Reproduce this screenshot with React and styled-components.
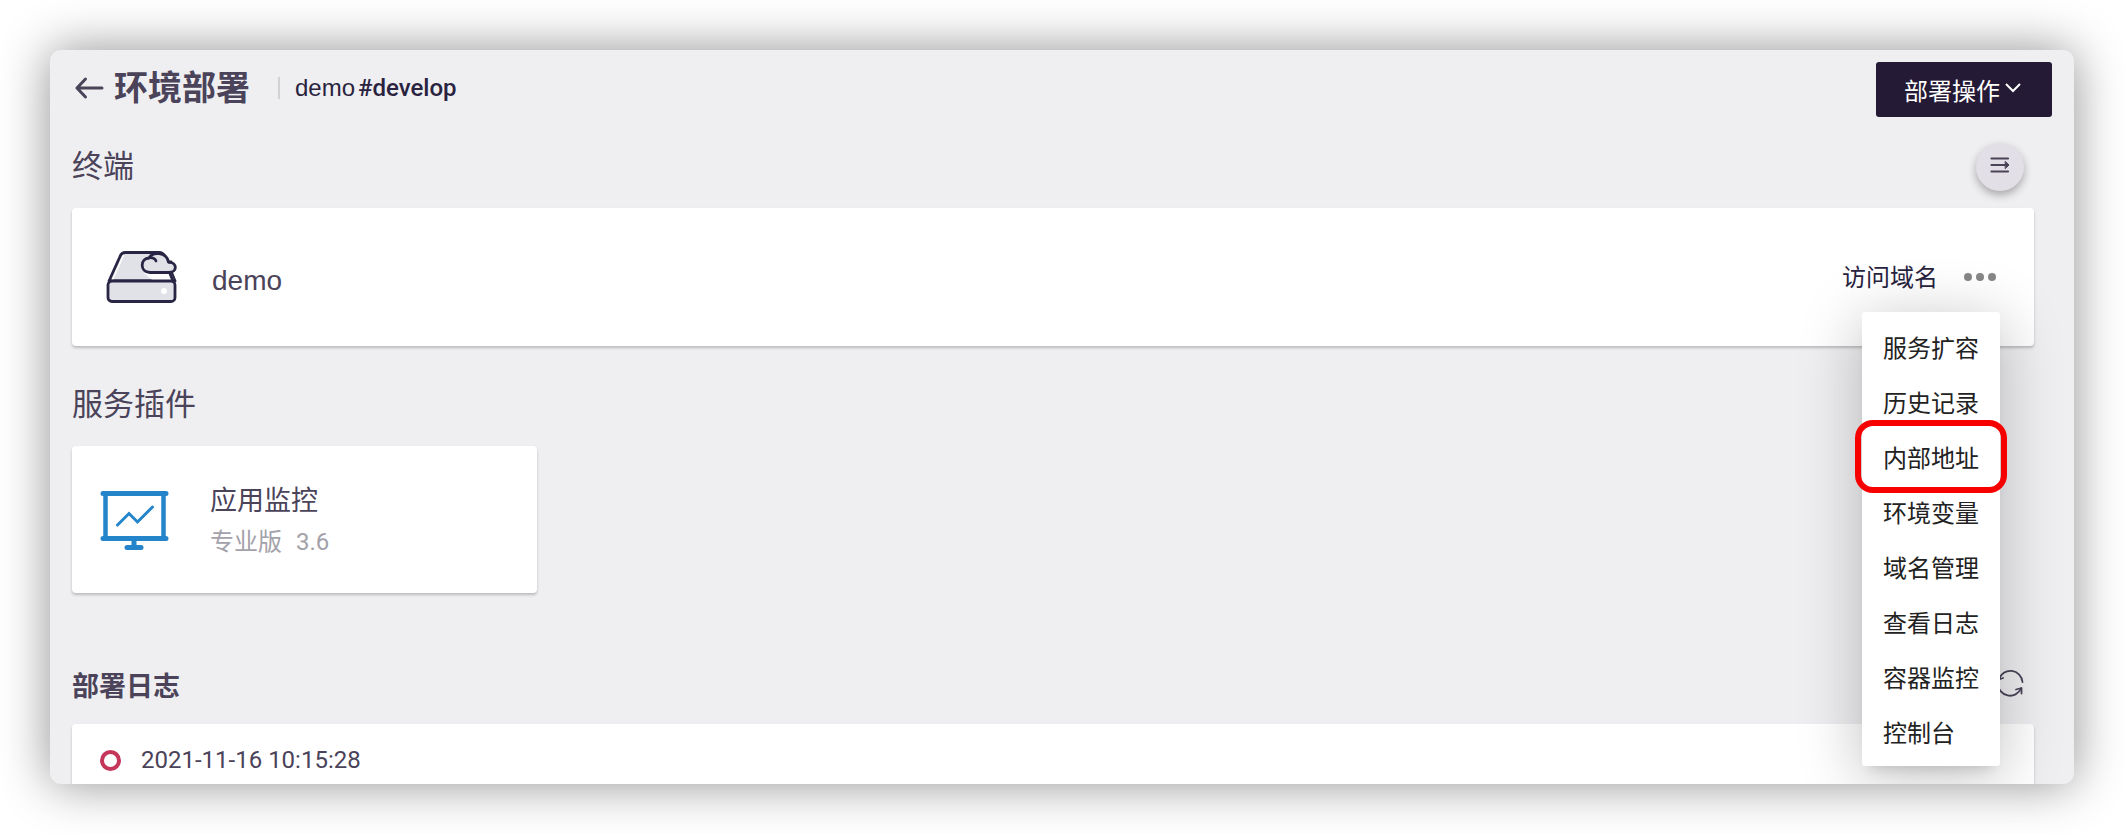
import React, { useState } from 'react';
import styled, { createGlobalStyle } from 'styled-components';

const menuItems = [
  '服务扩容',
  '历史记录',
  '内部地址',
  '环境变量',
  '域名管理',
  '查看日志',
  '容器监控',
  '控制台',
];

const BackIcon = () => (
  <svg width="30" height="24" viewBox="0 0 30 24" fill="none" stroke="currentColor" strokeWidth="3" strokeLinecap="round" strokeLinejoin="round" aria-hidden="true">
    <path d="M28 12H3M11.500 3L3 12l8.500 9" />
  </svg>
);

const ChevronIcon = () => (
  <svg width="16" height="16" viewBox="0 0 16 16" fill="none" stroke="currentColor" strokeWidth="2" aria-hidden="true">
    <path d="M1 2l7 7 7-7" />
  </svg>
);

const ListArrowIcon = () => (
  <svg width="20" height="16" viewBox="0 0 20 16" fill="none" stroke="currentColor" strokeWidth="2.200" strokeLinecap="round" strokeLinejoin="round" aria-hidden="true">
    <path d="M1.500 1.500h16.500M1.500 8h16.500M1.500 14.500h16.500" />
    <path d="M15.500 4.600L19 8 15.500 11.400z" fill="currentColor" strokeWidth="1" />
  </svg>
);

const DriveIcon = () => (
  <svg width="72" height="56" viewBox="0 0 72 56" fill="none" stroke="#292544" strokeWidth="2.8" strokeLinejoin="round" strokeLinecap="round" aria-hidden="true">
    <path d="M3 32L14 7.500Q15.500 3.500 19.500 3.500H53Q57 3.500 59 7.500L69 32z" fill="#e1e1e8" />
    <path d="M38 24L46 31H68L64 22z" fill="#fff" stroke="none" />
    <path d="M63.500 23.500L67.500 33" />
    <path d="M6.800 30L17.500 6.500" stroke="#fff" strokeWidth="1.500" />
    <rect x="2" y="32" width="67" height="20.500" rx="4" fill="#e1e1e8" />
    <path d="M44 23.500C33 23 34.500 9 43 9C46 2.500 60.500 2.500 62.500 13C71.500 13.500 71.500 23 63 23.500z" fill="#e1e1e8" />
    <path d="M43 9C46 8 49.500 9.500 50 12M62.500 13H65" />
    <circle cx="58" cy="42" r="3" fill="#fff" stroke="none" />
  </svg>
);

const MonitorIcon = () => (
  <svg width="70" height="60" viewBox="0 0 70 60" fill="none" stroke="#2585cb" strokeLinecap="round" aria-hidden="true">
    <path d="M3 3.500h63M3 48.500h63" strokeWidth="5" />
    <path d="M5.500 3.500v45M63.500 3.500v45" strokeWidth="4.500" />
    <path d="M34 49v8" strokeWidth="5" />
    <path d="M27 57.500h14" strokeWidth="5" />
    <path d="M17.500 35L29 23.500l8.500 8.500L52.500 17" strokeWidth="3" />
  </svg>
);

const RefreshIcon = () => (
  <svg width="28" height="28" viewBox="0 0 28 28" fill="none" stroke="currentColor" strokeWidth="1.800" strokeLinecap="round" strokeLinejoin="round" aria-hidden="true">
    <path d="M3 10.500A12 12 0 0 1 26.500 13" />
    <path d="M2 15A12 12 0 0 0 25 19.500" />
    <path d="M2 5.500L3 10.500l4-1.500M20 20.500l5.500-1.500v5.500" />
  </svg>
);

const App = () => {
  const [menuOpen, setMenuOpen] = useState(true);
  const [current, setCurrent] = useState('内部地址');

  return (
    <>
      <GlobalStyle />
      <Window>
        <Header>
          <Heading>
            <BackButton type="button" aria-label="返回">
              <BackIcon />
            </BackButton>
            <PageTitle>环境部署</PageTitle>
            <Branch>
              demo<strong>#develop</strong>
            </Branch>
          </Heading>
          <DeployButton type="button">
            部署操作
            <ChevronIcon />
          </DeployButton>
        </Header>

        <Content>
          <Section>
            <SectionHead>
              <SectionTitle>终端</SectionTitle>
              <RoundButton type="button" aria-label="切换列表">
                <ListArrowIcon />
              </RoundButton>
            </SectionHead>
            <ServiceCard>
              <DriveIcon />
              <ServiceName>demo</ServiceName>
              <Actions>
                <DomainLink href="#domain">访问域名</DomainLink>
                <MoreButton
                  type="button"
                  aria-label="更多"
                  aria-expanded={menuOpen}
                  onClick={() => setMenuOpen(!menuOpen)}
                >
                  <Dot />
                  <Dot />
                  <Dot />
                </MoreButton>
                {menuOpen && (
                  <Menu>
                    {menuItems.map(item => (
                      <MenuItem key={item} $current={item === current}>
                        <MenuButton type="button" onClick={() => setCurrent(item)}>
                          {item}
                        </MenuButton>
                      </MenuItem>
                    ))}
                  </Menu>
                )}
              </Actions>
            </ServiceCard>
          </Section>

          <Section $space="35px">
            <SectionHead>
              <SectionTitle>服务插件</SectionTitle>
            </SectionHead>
            <PluginCard>
              <MonitorIcon />
              <div>
                <PluginName>应用监控</PluginName>
                <PluginVersion>
                  <span>专业版</span>
                  <span>3.6</span>
                </PluginVersion>
              </div>
            </PluginCard>
          </Section>

          <Section $space="70px">
            <SectionHead $gap="13px">
              <SectionTitle $bold>部署日志</SectionTitle>
              <RefreshButton type="button" aria-label="刷新">
                <RefreshIcon />
              </RefreshButton>
            </SectionHead>
            <LogCard>
              <LogMarker />
              <time dateTime="2021-11-16T10:15:28">2021-11-16 10:15:28</time>
            </LogCard>
          </Section>
        </Content>
      </Window>
    </>
  );
};

const GlobalStyle = createGlobalStyle`
  * {
    box-sizing: border-box;
  }
  body {
    margin: 0;
    background: #ffffff;
    color: #4a4359;
    font-family: Roboto, "Noto Sans CJK SC", sans-serif;
    font-size: 24px;
  }
  button {
    padding: 0;
    border: 0;
    background: transparent;
    color: inherit;
    font: inherit;
    cursor: pointer;
  }
  svg {
    display: block;
    flex-shrink: 0;
  }
`

const Window = styled.main`
  height: calc(100vh - 100px);
  margin: 50px;
  overflow: hidden;
  background: #efeff1;
  border-radius: 11px;
  box-shadow: 0 0 50px rgba(0, 0, 0, 0.44);
`

const Header = styled.header`
  display: flex;
  align-items: center;
  justify-content: space-between;
  padding: 12px 22px 0 24px;
`

const Heading = styled.div`
  display: flex;
  align-items: center;
  padding-bottom: 4px;
`

const BackButton = styled.button`
  margin-right: 10px;
`

const PageTitle = styled.h1`
  margin: 0;
  font-size: 34px;
  line-height: 48px;
  font-weight: bold;
`

const Branch = styled.div`
  margin-left: 28px;
  padding-left: 15px;
  border-left: 2px solid #d2d1d6;
  color: #292340;
  font-family: "Liberation Sans", sans-serif;
  line-height: 22px;

  strong {
    margin-left: 3px;
    font-family: Roboto, sans-serif;
    font-weight: 500;
  }
`

const DeployButton = styled.button`
  display: flex;
  align-items: center;
  gap: 5px;
  height: 55px;
  padding: 0 31px 0 28px;
  border-radius: 3px;
  background: #241a36;
  color: #ffffff;
`

const Content = styled.div`
  padding: 26px 40px 0 22px;
`

const Section = styled.section`
  margin-top: ${props => props.$space || 0};
`

const SectionHead = styled.div`
  display: flex;
  align-items: center;
  justify-content: space-between;
  height: 48px;
  margin-bottom: ${props => props.$gap || '17px'};
  padding-right: 10px;
`

const SectionTitle = styled.h2`
  margin: 0;
  font-size: ${props => (props.$bold ? '27px' : '31px')};
  font-weight: ${props => (props.$bold ? 'bold' : 'normal')};
  line-height: 44px;
`

const RoundButton = styled.button`
  display: flex;
  justify-content: center;
  align-items: center;
  width: 48px;
  height: 48px;
  padding-bottom: 4px;
  border-radius: 50%;
  background: #e2dfe6;
  box-shadow: 0 4px 8px rgba(0, 0, 0, 0.3);
`

const RefreshButton = styled.button`
  display: flex;
  margin-bottom: 8px;
`

const Card = styled.div`
  display: flex;
  background: #ffffff;
  border-radius: 4px;
  box-shadow: 0 2px 3px rgba(0, 0, 0, 0.22);
`

const ServiceCard = styled(Card)`
  align-items: center;
  height: 138px;
  padding: 0 34px;
`

const ServiceName = styled.div`
  margin-left: 34px;
  padding-top: 8px;
  font-family: "Liberation Sans", sans-serif;
  font-size: 28px;
  line-height: 32px;
`

const Actions = styled.div`
  position: relative;
  display: flex;
  align-items: center;
  gap: 26px;
  margin-left: auto;
`

const DomainLink = styled.a`
  padding-top: 2px;
  color: #292340;
  line-height: 36px;
  text-decoration: none;
`

const MoreButton = styled.button`
  display: flex;
  align-items: center;
  gap: 4px;
  height: 36px;
  margin-right: 4px;
`

const Dot = styled.span`
  width: 8px;
  height: 8px;
  border-radius: 50%;
  background: #878787;
`

const Menu = styled.ul`
  position: absolute;
  top: calc(100% + 16px);
  right: 0;
  z-index: 1;
  width: 138px;
  margin: 0;
  padding: 7px 0;
  list-style: none;
  background: #ffffff;
  border-radius: 3px;
  box-shadow: 0 10px 12px -8px rgba(0, 0, 0, 0.15), 0 10px 60px 4px rgba(0, 0, 0, 0.22);
`

const MenuItem = styled.li`
  position: relative;
  height: 55px;

  /* outline round the current entry, wider than the menu */
  &::after {
    content: '';
    display: ${props => (props.$current ? 'block' : 'none')};
    position: absolute;
    inset: -9px -7px;
    border: 6px solid #f60000;
    border-radius: 18px;
    pointer-events: none;
  }
`

const MenuButton = styled.button`
  width: 100%;
  height: 100%;
  padding-left: 21px;
  color: #222222;
  text-align: left;
`

const PluginCard = styled(Card)`
  align-items: center;
  width: 465px;
  height: 147px;
  padding: 0 28px;
  gap: 40px;
`

const PluginName = styled.div`
  font-size: 27px;
  line-height: 44px;
`

const PluginVersion = styled.div`
  display: flex;
  gap: 14px;
  color: #a3a1aa;
  line-height: 38px;
`

const LogCard = styled(Card)`
  align-items: center;
  gap: 20px;
  padding: 18px 28px 60px;
  line-height: 36px;
`

const LogMarker = styled.span`
  width: 21px;
  height: 21px;
  border: 4px solid #c5365b;
  border-radius: 50%;
`

export default App
